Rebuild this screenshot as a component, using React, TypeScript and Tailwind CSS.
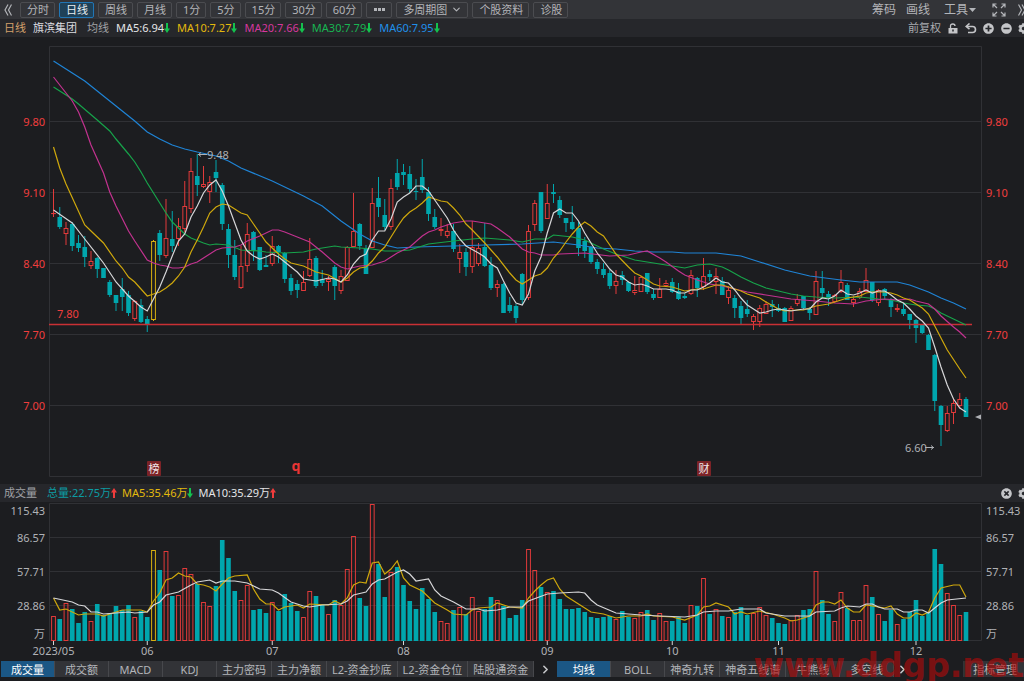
import { ChevronDown, ChevronRight } from "lucide-react";
import { FaCog, FaMinusCircle, FaPlusCircle, FaTimesCircle } from "react-icons/fa";
import clsx from "clsx";

type Kind = "u" | "d" | "y";
// kind, high, body top, body bottom, low, volume top
type Bar = [Kind, number, number, number, number, number];
type Point = [number, number];

const bars: Bar[] = [
  ["u", 189, 213, 213, 217, 616], ["d", 207, 217, 227, 229, 619], ["u", 222, 228, 234, 245, 603],
  ["d", 222, 224, 246, 251, 609], ["d", 235, 243, 248, 252, 623], ["d", 236, 247, 257, 267, 612],
  ["u", 251, 261, 266, 269, 621], ["d", 257, 258, 269, 278, 604], ["d", 268, 268, 278, 278, 615],
  ["d", 280, 282, 295, 297, 613], ["d", 295, 295, 303, 311, 606], ["d", 278, 289, 297, 311, 610],
  ["d", 291, 295, 313, 316, 605], ["u", 300, 301, 319, 321, 617], ["d", 299, 305, 322, 323, 611],
  ["d", 316, 319, 324, 332, 617], ["y", 240, 241, 320, 321, 550], ["d", 230, 233, 255, 261, 570],
  ["u", 199, 238, 256, 258, 551], ["d", 211, 239, 246, 252, 596], ["u", 218, 226, 239, 246, 595],
  ["u", 181, 206, 229, 232, 568], ["u", 158, 171, 209, 213, 574], ["d", 154, 176, 185, 196, 584],
  ["u", 166, 184, 187, 188, 602], ["u", 176, 182, 192, 203, 606], ["d", 160, 172, 178, 192, 586],
  ["d", 183, 185, 224, 230, 540], ["d", 224, 229, 255, 268, 558], ["d", 240, 255, 277, 280, 591],
  ["u", 246, 266, 288, 289, 600], ["u", 223, 234, 266, 272, 585], ["d", 231, 232, 251, 261, 610],
  ["d", 247, 247, 270, 271, 609], ["d", 255, 265, 267, 267, 613], ["u", 236, 246, 264, 266, 602],
  ["d", 245, 246, 252, 263, 611], ["d", 252, 253, 279, 283, 594], ["d", 274, 278, 291, 295, 603],
  ["d", 280, 284, 290, 298, 611], ["u", 271, 282, 291, 291, 617], ["u", 238, 259, 276, 277, 591],
  ["d", 256, 258, 286, 288, 596], ["d", 270, 279, 283, 286, 605], ["u", 276, 279, 282, 291, 614],
  ["d", 265, 267, 286, 300, 600], ["u", 270, 276, 291, 294, 605], ["u", 246, 247, 281, 281, 569],
  ["u", 193, 231, 247, 247, 536], ["d", 223, 224, 246, 250, 598], ["d", 245, 248, 274, 274, 606],
  ["u", 188, 203, 248, 248, 504], ["d", 177, 198, 207, 217, 564], ["d", 199, 215, 227, 230, 597],
  ["u", 179, 188, 227, 230, 572], ["d", 159, 173, 187, 190, 567], ["d", 164, 172, 175, 185, 585],
  ["d", 166, 174, 189, 193, 601], ["d", 179, 191, 192, 200, 609], ["d", 159, 177, 190, 193, 588],
  ["d", 187, 192, 214, 221, 599], ["d", 209, 217, 227, 229, 612], ["u", 218, 229, 231, 236, 621],
  ["u", 224, 231, 236, 238, 623], ["d", 224, 231, 249, 252, 610], ["u", 244, 252, 259, 273, 607],
  ["d", 248, 252, 267, 276, 614], ["u", 221, 247, 267, 273, 597], ["u", 243, 248, 264, 266, 611],
  ["d", 223, 247, 266, 267, 609], ["d", 257, 265, 288, 290, 597], ["u", 280, 284, 288, 297, 600],
  ["d", 283, 284, 313, 313, 606], ["d", 297, 305, 311, 313, 618], ["d", 304, 306, 318, 323, 615],
  ["d", 273, 274, 300, 304, 600], ["u", 225, 231, 298, 300, 549], ["u", 200, 203, 225, 231, 570],
  ["d", 192, 192, 231, 233, 587], ["u", 184, 203, 219, 219, 592], ["d", 184, 192, 194, 203, 591],
  ["d", 196, 200, 215, 218, 599], ["d", 218, 218, 223, 232, 609], ["d", 206, 222, 229, 230, 609],
  ["d", 222, 228, 248, 256, 608], ["d", 237, 241, 251, 258, 612], ["d", 246, 247, 262, 264, 617],
  ["d", 259, 262, 269, 274, 618], ["d", 263, 269, 275, 278, 617], ["d", 270, 273, 286, 289, 616],
  ["u", 270, 281, 286, 294, 619], ["d", 271, 275, 280, 285, 611], ["d", 281, 282, 291, 292, 617],
  ["u", 276, 290, 293, 295, 618], ["u", 276, 277, 292, 292, 612], ["d", 273, 273, 292, 294, 610],
  ["d", 289, 294, 298, 300, 620], ["u", 278, 289, 298, 298, 613], ["u", 280, 283, 286, 287, 621],
  ["d", 278, 282, 292, 293, 621], ["d", 283, 291, 299, 300, 617], ["d", 293, 296, 298, 299, 623],
  ["u", 270, 275, 294, 295, 605], ["d", 277, 278, 288, 297, 606], ["u", 258, 276, 287, 290, 578],
  ["d", 270, 274, 277, 281, 614], ["u", 268, 276, 282, 294, 609], ["d", 277, 281, 295, 295, 616],
  ["u", 286, 290, 298, 304, 617], ["d", 295, 298, 308, 318, 612], ["d", 301, 306, 318, 325, 607],
  ["d", 300, 309, 314, 317, 615], ["u", 314, 316, 322, 330, 613], ["u", 305, 308, 322, 327, 607],
  ["u", 301, 304, 314, 314, 615], ["d", 300, 304, 307, 317, 618], ["d", 304, 308, 311, 312, 623],
  ["d", 307, 308, 322, 322, 624], ["u", 306, 308, 321, 321, 620], ["u", 294, 299, 304, 306, 615],
  ["d", 296, 296, 308, 310, 610], ["d", 307, 309, 313, 320, 609], ["u", 271, 281, 315, 315, 571],
  ["d", 271, 288, 293, 297, 600], ["d", 291, 294, 298, 306, 614], ["u", 294, 295, 302, 303, 621],
  ["u", 270, 282, 292, 293, 592], ["d", 283, 285, 300, 300, 608], ["u", 296, 299, 303, 307, 620],
  ["u", 288, 291, 298, 299, 620], ["u", 268, 280, 292, 292, 585], ["d", 282, 282, 300, 302, 597],
  ["u", 289, 290, 303, 306, 614], ["d", 288, 289, 296, 299, 621], ["d", 298, 299, 307, 317, 610],
  ["u", 304, 308, 310, 312, 624], ["d", 303, 309, 314, 316, 619], ["d", 314, 314, 320, 329, 612],
  ["d", 319, 320, 328, 343, 600], ["d", 325, 325, 333, 334, 616], ["d", 334, 335, 350, 350, 612],
  ["d", 354, 355, 401, 411, 549], ["d", 405, 406, 425, 446, 564], ["u", 406, 413, 431, 432, 593],
  ["u", 398, 403, 413, 424, 605], ["u", 393, 399, 406, 408, 615], ["d", 397, 399, 417, 417, 612],
];

const ma5: Point[] = [
  [0, 210], [3, 223], [5, 239], [8, 263], [10, 282], [12, 296], [14, 307], [15, 311], [16, 299], [17, 287],
  [18, 272], [19, 256], [20, 241], [21, 234], [22, 217], [23, 206], [24, 193], [25, 185], [26, 180], [27, 191],
  [28, 206], [29, 223], [30, 240], [31, 251], [32, 256], [33, 259], [34, 257], [35, 254], [36, 257], [37, 262],
  [39, 272], [40, 279], [42, 281], [44, 278], [45, 279], [46, 282], [47, 275], [48, 264], [49, 257], [50, 254],
  [51, 240], [52, 231], [53, 231], [54, 219], [55, 202], [56, 197], [57, 193], [58, 186], [59, 186], [60, 191],
  [61, 200], [62, 209], [63, 218], [64, 230], [65, 239], [66, 246], [68, 253], [69, 257], [70, 264], [71, 268],
  [72, 281], [73, 293], [74, 303], [75, 305], [76, 294], [77, 271], [78, 257], [79, 233], [80, 213], [81, 209],
  [82, 213], [83, 213], [84, 221], [85, 233], [86, 243], [87, 253], [88, 261], [89, 269], [90, 275], [91, 277],
  [92, 282], [93, 285], [94, 284], [95, 286], [96, 289], [98, 289], [99, 290], [100, 293], [101, 293], [102, 290],
  [103, 290], [104, 287], [105, 283], [106, 278], [107, 282], [108, 283], [109, 290], [110, 298], [111, 305],
  [112, 309], [113, 313], [114, 312], [115, 310], [116, 309], [118, 311], [120, 309], [121, 309], [122, 302],
  [123, 298], [124, 299], [125, 296], [126, 290], [127, 294], [128, 295], [129, 293], [130, 290], [131, 293],
  [132, 291], [133, 291], [134, 295], [135, 300], [136, 303], [137, 309], [138, 316], [139, 321], [140, 328],
  [141, 347], [142, 367], [143, 385], [144, 399], [145, 408], [146, 412],
];

const ma10: Point[] = [
  [0, 147], [1, 168], [2, 184], [5, 225], [6, 231], [8, 243], [10, 261], [11, 268], [12, 277], [13, 282],
  [15, 296], [16, 294], [17, 292], [18, 288], [19, 283], [20, 276], [21, 267], [22, 252], [23, 240], [24, 227],
  [25, 213], [26, 207], [27, 204], [28, 205], [29, 209], [30, 213], [31, 215], [32, 224], [33, 233], [34, 242],
  [35, 248], [36, 254], [37, 259], [38, 263], [40, 266], [42, 272], [44, 275], [46, 282], [47, 278], [48, 272],
  [49, 268], [50, 267], [51, 261], [52, 253], [53, 247], [54, 237], [55, 227], [56, 218], [57, 212], [58, 208],
  [59, 203], [60, 197], [61, 199], [62, 201], [63, 202], [64, 208], [65, 215], [66, 224], [67, 230], [69, 243],
  [70, 250], [71, 257], [73, 273], [74, 280], [75, 284], [76, 280], [77, 276], [78, 274], [79, 268], [80, 258],
  [81, 251], [82, 242], [83, 234], [84, 227], [85, 222], [86, 226], [87, 232], [88, 236], [89, 245], [90, 254],
  [92, 267], [93, 273], [94, 276], [96, 284], [97, 286], [99, 287], [101, 291], [103, 289], [104, 289],
  [106, 285], [107, 285], [108, 287], [109, 289], [110, 291], [111, 294], [112, 296], [113, 298], [114, 302],
  [116, 309], [117, 311], [119, 310], [120, 310], [122, 306], [124, 304], [125, 302], [127, 298], [129, 296],
  [130, 293], [131, 292], [133, 292], [134, 293], [135, 295], [136, 298], [137, 300], [138, 304], [139, 308],
  [140, 314], [141, 326], [142, 338], [143, 350], [145, 369], [146, 378],
];

const ma20: Point[] = [
  [0, 77], [2, 93], [3, 101], [4, 112], [5, 127], [6, 145], [7, 159], [8, 173], [9, 192], [10, 206], [12, 231],
  [13, 241], [15, 260], [16, 263], [17, 265], [18, 266], [19, 268], [20, 268], [21, 267], [22, 264], [23, 262],
  [24, 258], [26, 250], [27, 248], [29, 247], [30, 245], [31, 241], [33, 236], [35, 230], [36, 230], [37, 232],
  [39, 237], [41, 242], [43, 252], [45, 263], [46, 267], [47, 269], [49, 266], [51, 265], [53, 261], [55, 253],
  [57, 247], [59, 236], [60, 232], [61, 230], [62, 227], [64, 223], [66, 221], [67, 221], [69, 223], [70, 224],
  [71, 228], [73, 237], [75, 249], [76, 252], [77, 253], [78, 255], [80, 255], [81, 254], [85, 253], [89, 256],
  [92, 255], [94, 252], [95, 251], [97, 258], [98, 262], [100, 271], [101, 275], [103, 280], [105, 284],
  [107, 286], [109, 289], [111, 292], [114, 295], [118, 299], [122, 301], [125, 303], [128, 304], [130, 301],
  [133, 299], [135, 300], [137, 299], [138, 301], [140, 304], [141, 309], [142, 316], [144, 327], [145, 332],
  [146, 338],
];

const ma30: Point[] = [
  [0, 87], [3, 99], [4, 104], [7, 120], [9, 131], [10, 139], [12, 154], [13, 162], [14, 172], [15, 183],
  [17, 203], [18, 213], [19, 222], [21, 234], [22, 238], [24, 243], [25, 245], [26, 244], [28, 245], [30, 250],
  [33, 251], [34, 252], [37, 253], [40, 252], [42, 249], [45, 246], [46, 247], [49, 248], [51, 249], [53, 251],
  [55, 251], [57, 250], [58, 248], [60, 244], [64, 241], [67, 239], [69, 238], [73, 240], [75, 242], [77, 239],
  [79, 239], [80, 235], [83, 237], [85, 240], [88, 249], [90, 254], [93, 260], [96, 263], [98, 265], [101, 268],
  [103, 265], [105, 264], [107, 267], [108, 270], [110, 277], [112, 283], [114, 288], [116, 291], [118, 294],
  [120, 296], [122, 297], [125, 298], [129, 297], [132, 299], [134, 300], [136, 303], [138, 305], [140, 306],
  [141, 309], [142, 313], [144, 319], [146, 325],
];

const ma60: Point[] = [
  [0, 61], [3, 73], [5, 81], [10, 106], [13, 121], [15, 132], [17, 139], [19, 145], [21, 149], [23, 152],
  [26, 156], [28, 161], [30, 168], [35, 181], [40, 196], [43, 206], [46, 221], [49, 234], [51, 241], [53, 245],
  [55, 248], [58, 247], [64, 246], [69, 245], [75, 244], [80, 242], [84, 245], [87, 248], [90, 249], [93, 251],
  [96, 252], [99, 252], [101, 253], [106, 253], [110, 256], [113, 262], [117, 270], [121, 276], [126, 280],
  [129, 282], [135, 282], [137, 285], [140, 292], [142, 298], [144, 303], [146, 309],
];

const volMa5: Point[] = [
  [0, 598], [1, 610], [2, 609], [4, 615], [5, 614], [7, 614], [8, 616], [10, 612], [11, 610], [14, 610],
  [15, 612], [16, 601], [17, 593], [18, 580], [19, 578], [20, 573], [21, 576], [22, 577], [23, 584], [24, 585],
  [25, 587], [26, 591], [27, 584], [28, 578], [29, 576], [31, 575], [32, 589], [33, 599], [34, 604], [35, 604],
  [36, 610], [37, 607], [38, 606], [39, 605], [40, 608], [41, 604], [44, 605], [45, 601], [46, 604], [47, 598],
  [48, 585], [49, 582], [50, 583], [51, 563], [52, 562], [53, 574], [54, 569], [55, 561], [56, 578], [57, 585],
  [59, 591], [61, 603], [63, 610], [64, 614], [66, 615], [67, 610], [68, 608], [70, 607], [71, 603], [73, 607],
  [75, 608], [76, 598], [77, 591], [78, 585], [79, 580], [80, 578], [81, 589], [82, 596], [84, 604], [86, 612],
  [88, 614], [90, 618], [92, 616], [94, 616], [95, 614], [96, 616], [99, 617], [101, 620], [103, 615],
  [104, 607], [105, 606], [106, 603], [108, 607], [109, 614], [110, 612], [111, 614], [113, 611], [115, 614],
  [117, 618], [118, 621], [119, 620], [121, 616], [122, 605], [123, 602], [124, 602], [125, 604], [126, 600],
  [127, 608], [128, 612], [129, 612], [130, 605], [133, 608], [134, 606], [135, 614], [136, 618], [137, 618],
  [138, 613], [139, 615], [140, 612], [141, 598], [142, 588], [144, 585], [145, 585], [146, 597],
];

const volMa10: Point[] = [
  [0, 598], [3, 602], [4, 605], [5, 606], [6, 612], [7, 612], [8, 614], [12, 612], [13, 613], [15, 612],
  [16, 605], [17, 602], [18, 595], [20, 592], [22, 585], [23, 582], [25, 580], [26, 583], [27, 581], [29, 581],
  [31, 583], [33, 589], [35, 590], [36, 593], [38, 602], [40, 606], [41, 607], [43, 605], [46, 604], [47, 601],
  [48, 595], [50, 592], [51, 584], [52, 580], [53, 579], [55, 572], [56, 570], [57, 574], [58, 581], [60, 579],
  [61, 590], [62, 596], [64, 602], [66, 609], [68, 609], [69, 611], [71, 610], [73, 607], [75, 607], [76, 601],
  [79, 594], [81, 593], [84, 592], [85, 593], [86, 600], [87, 605], [90, 613], [94, 615], [97, 616], [101, 617],
  [103, 615], [104, 612], [106, 611], [108, 611], [110, 609], [113, 609], [114, 613], [117, 616], [121, 616],
  [122, 612], [125, 611], [126, 608], [127, 606], [129, 607], [130, 604], [131, 604], [132, 607], [133, 609],
  [135, 609], [136, 612], [137, 612], [138, 610], [139, 610], [140, 613], [141, 608], [142, 603], [143, 600],
  [146, 598],
];

const kindColor: Record<Kind, string> = { u: "#e23a3a", d: "#00a6ad", y: "#d8b010" };

const barX = (i: number) => 53.5 + i * 6.25;

const toPoints = (points: Point[]) => points.map(([i, y]) => `${barX(i)},${y}`).join(" ");

function Line({ points, color }: { points: Point[]; color: string }) {
  return <polyline points={toPoints(points)} fill="none" stroke={color} strokeWidth="1.2" />;
}

function Candle({ bar, index }: { bar: Bar; index: number }) {
  const [kind, high, top, bottom, low] = bar;
  const x = barX(index);
  const color = kindColor[kind];
  const height = Math.max(bottom - top, 1);

  return (
    <g>
      <path d={`M${x} ${high}V${top}M${x} ${bottom}V${low}`} stroke={color} />
      {kind === "d" ? (
        <rect x={x - 2.3} y={top} width="4.6" height={height} fill={color} />
      ) : (
        <rect x={x - 1.9} y={top + 0.5} width="3.8" height={Math.max(height - 1, 0.1)} fill="none" stroke={color} />
      )}
    </g>
  );
}

function VolumeBar({ bar, index }: { bar: Bar; index: number }) {
  const kind = bar[0];
  const top = bar[5];
  const x = barX(index);

  return kind === "d" ? (
    <rect x={x - 2.3} y={top} width="4.6" height={641 - top} fill={kindColor[kind]} />
  ) : (
    <rect x={x - 1.9} y={top + 0.5} width="3.8" height={640 - top} fill="none" stroke={kindColor[kind]} />
  );
}

const priceTicks = [
  { label: "9.80", y: 122 },
  { label: "9.10", y: 193 },
  { label: "8.40", y: 264 },
  { label: "7.70", y: 335 },
  { label: "7.00", y: 406 },
];

const badges = [
  { label: "榜", x: 147 },
  { label: "财", x: 697 },
];

function PriceChart() {
  return (
    <svg viewBox="0 37 1024 447" className="block w-full text-[11px]" role="img" aria-label="日线">
      <g stroke="#303135" fill="none">
        <path d="M49.5 46.5H981.5V476.5H49.5Z" />
        {priceTicks.map((t) => (
          <path key={t.label} d={`M49 ${t.y - 0.5}H981`} />
        ))}
      </g>
      <g fill="#f03e3e">
        {priceTicks.map((t) => (
          <g key={t.label}>
            <text x="45" y={t.y + 4} textAnchor="end">{t.label}</text>
            <text x="986" y={t.y + 4}>{t.label}</text>
          </g>
        ))}
        <text x="57" y="318">7.80</text>
      </g>
      {bars.map((bar, i) => (
        <Candle key={i} bar={bar} index={i} />
      ))}
      <path d="M49 324.5H972" stroke="#c93034" strokeWidth="1.4" />
      <Line points={ma60} color="#1f84d6" />
      <Line points={ma30} color="#17a34a" />
      <Line points={ma20} color="#c2328f" />
      <Line points={ma10} color="#cfa80c" />
      <Line points={ma5} color="#d6d6d8" />

      <g fill="#aeb0b4">
        <text x="207" y="159">9.48</text>
        <text x="905" y="452">6.60</text>
        <path d="M975 417L981 414.500V419.500Z" />
      </g>
      <g stroke="#aeb0b4" fill="none">
        <path d="M207 154.500H198M201 152.500L198.500 154.500L201 156.500" />
        <path d="M925 447.500H934M931 445.500L933.500 447.500L931 449.500" />
      </g>

      {badges.map((b) => (
        <g key={b.label}>
          <rect x={b.x} y="461" width="14" height="15" rx="1" fill="#7c2327" />
          <text x={b.x + 7} y="472.500" textAnchor="middle" fill="#f0e6e6">{b.label}</text>
        </g>
      ))}
      <text x="296" y="471" textAnchor="middle" fill="#e93535" className="text-[14px] font-bold">q</text>
    </svg>
  );
}

const volumeTicks = [
  { label: "115.43", y: 515 },
  { label: "86.57", y: 542 },
  { label: "57.71", y: 576 },
  { label: "28.86", y: 610 },
  { label: "万", y: 638 },
];

const months = [
  { label: "2023/05", index: 0 },
  { label: "06", index: 15 },
  { label: "07", index: 35 },
  { label: "08", index: 56 },
  { label: "09", index: 79 },
  { label: "10", index: 99 },
  { label: "11", index: 116 },
  { label: "12", index: 138 },
];

function VolumeChart() {
  return (
    <svg viewBox="0 502 1024 159" className="block w-full text-[11px]" role="img" aria-label="成交量">
      <g stroke="#303135" fill="none">
        <path d="M49.5 503.5H981.5V640.5H49.5Z" />
        <path d="M49 537.5H981M49 571.5H981M49 605.5H981" />
      </g>
      <g fill="#b0b2b6">
        {volumeTicks.map((t) => (
          <g key={t.label}>
            <text x="45" y={t.y} textAnchor="end">{t.label}</text>
            <text x="986" y={t.y}>{t.label}</text>
          </g>
        ))}
      </g>
      {bars.map((bar, i) => (
        <VolumeBar key={i} bar={bar} index={i} />
      ))}
      <Line points={volMa5} color="#cfa80c" />
      <Line points={volMa10} color="#d6d6d8" />
      {months.map((m) => (
        <g key={m.label}>
          <path d={`M${barX(m.index)} 641V645`} stroke="#d6d6d8" />
          <text x={barX(m.index)} y="655" textAnchor="middle" fill="#b0b2b6">{m.label}</text>
        </g>
      ))}
    </svg>
  );
}

function Arrow({ up = false }: { up?: boolean }) {
  return (
    <svg viewBox="0 0 6 10" className={clsx("h-[10px] w-[6px] shrink-0", up ? "rotate-180 text-[#f03c3c]" : "text-[#14c24e]")}>
      <path d="M2 0H4V5.500H6L3 10L0 5.500H2Z" fill="currentColor" />
    </svg>
  );
}

function DoubleChevron({ flip = false }: { flip?: boolean }) {
  return (
    <svg viewBox="0 0 8 12" className={clsx("h-3 w-2", flip && "rotate-180")} fill="none" stroke="currentColor" strokeWidth="1.200">
      <path d="M4 0.500L1 6L4 11.500M7.500 0.500L4.500 6L7.500 11.500" />
    </svg>
  );
}

function Reading({ text, color, up }: { text: string; color: string; up?: boolean }) {
  return (
    <span className={clsx("flex items-center", color)}>
      {text}
      <Arrow up={up} />
    </span>
  );
}

const periods = ["分时", "日线", "周线", "月线", "1分", "5分", "15分", "30分", "60分"];

const toolButton = "flex h-4 items-center rounded-[2px] border pr-[5px] pl-[6px] leading-none";

function Toolbar() {
  return (
    <header className="flex h-[19px] items-center bg-[#333438] text-[#b3b5b9]">
      <button aria-label="收起" className="flex w-[15px] shrink-0 justify-center">
        <DoubleChevron />
      </button>
      <nav className="ml-[5px] flex gap-1">
        {periods.map((p) => (
          <button
            key={p}
            className={clsx(
              toolButton,
              p === "日线" ? "border-[#2176b5] bg-[#1f4158] text-[#e8eef2]" : "border-[#4b4c50]",
            )}
          >
            {p}
          </button>
        ))}
        <button aria-label="更多周期" className={clsx(toolButton, "border-[#4b4c50]")}>
          <svg viewBox="0 0 13 3" className="h-[3px] w-[13px]" fill="currentColor">
            <path d="M1 0H4V3H1ZM5 0H8V3H5ZM9 0H12V3H9Z" />
          </svg>
        </button>
        <button className={clsx(toolButton, "gap-1 border-[#4b4c50]")}>
          多周期图
          <ChevronDown size={11} strokeWidth={2.5} />
        </button>
        <button className={clsx(toolButton, "border-[#4b4c50]")}>个股资料</button>
        <button className={clsx(toolButton, "border-[#4b4c50]")}>诊股</button>
      </nav>
      <div className="-mr-[2px] ml-auto flex shrink-0 items-center text-[12px]">
        <button className="mr-[10px]">筹码</button>
        <button className="mr-[14px]">画线</button>
        <button className="mr-4 flex items-center gap-px">
          工具
          <svg viewBox="0 0 7 4" className="h-1 w-[7px]" fill="currentColor">
            <path d="M0 0H7L3.500 4Z" />
          </svg>
        </button>
        <button aria-label="全屏" className="mr-3">
          <svg viewBox="0 0 14 14" className="size-[14px]" fill="none" stroke="currentColor" strokeWidth="1.200">
            <path d="M1 4.500V1H4.500M1 1L5 5M9.500 1H13V4.500M13 1L9 5M1 9.500V13H4.500M1 13L5 9M13 9.500V13H9.500M13 13L9 9" />
          </svg>
        </button>
        <button aria-label="展开">
          <DoubleChevron flip />
        </button>
      </div>
    </header>
  );
}

function PriceHeader() {
  return (
    <div className="flex h-[18px] items-center bg-[#26272b] pl-1">
      <span className="text-[#d3a16b]">日线</span>
      <h1 className="ml-[7px] text-[#dcdde0]">旗滨集团</h1>
      <span className="ml-[10px] text-[#a0a2a6]">均线</span>
      <div className="ml-[7px] flex gap-[7px]">
        <Reading text="MA5:6.94" color="text-[#e4e5e7]" />
        <Reading text="MA10:7.27" color="text-[#e3b90d]" />
        <Reading text="MA20:7.66" color="text-[#d6379e]" />
        <Reading text="MA30:7.79" color="text-[#18b552]" />
        <Reading text="MA60:7.95" color="text-[#2090ea]" />
      </div>
      <div className="-mr-[5px] ml-auto flex shrink-0 items-center text-[#c4c5c8]">
        <button className="mr-[7px] text-[#a9abaf]">前复权</button>
        <button aria-label="锁定" className="mr-[7px]">
          <svg viewBox="0 0 10 11" className="h-[11px] w-[10px]" fill="none" stroke="currentColor">
            <path d="M2.500 5V3Q2.500 1 4.800 1Q7 1 7 3" strokeWidth="1.300" />
            <path d="M0.500 5H9.500V10.500H0.500Z" fill="currentColor" stroke="none" />
            <path d="M5 6.500V8.500" stroke="#26272b" strokeWidth="1.500" />
          </svg>
        </button>
        <button aria-label="撤销" className="mr-[6px]">
          <svg viewBox="0 0 12 11" className="h-[11px] w-3" fill="none" stroke="currentColor" strokeWidth="1.600">
            <path d="M2 3.500H7.500Q10.500 3.500 10.500 6.500Q10.500 9.500 7.500 9.500H3" />
            <path d="M4.500 0.500L1.200 3.500L4.500 6.200" />
          </svg>
        </button>
        <button aria-label="放大" className="mr-[7px]">
          <FaPlusCircle size={11} />
        </button>
        <button aria-label="缩小" className="mr-[6px]">
          <FaMinusCircle size={11} />
        </button>
        <button aria-label="设置">
          <FaCog size={11} />
        </button>
      </div>
    </div>
  );
}

function VolumeHeader() {
  return (
    <div className="flex h-[18px] items-center bg-[#26272b] pl-1">
      <h2 className="text-[#a0a2a6]">成交量</h2>
      <div className="ml-[10px] flex gap-[5px]">
        <Reading text="总量:22.75万" color="text-[#0c9ca3]" up />
        <Reading text="MA5:35.46万" color="text-[#e3b90d]" />
        <Reading text="MA10:35.29万" color="text-[#e4e5e7]" up />
      </div>
      <div className="-mr-[5px] ml-auto flex shrink-0 items-center text-[#c4c5c8]">
        <button aria-label="关闭" className="mr-[6px]">
          <FaTimesCircle size={11} />
        </button>
        <button aria-label="设置">
          <FaCog size={11} />
        </button>
      </div>
    </div>
  );
}

const volumeTabs = ["成交量", "成交额", "MACD", "KDJ", "主力密码", "主力净额", "L2-资金抄底", "L2-资金仓位", "陆股通资金"];
const priceTabs = ["均线", "BOLL", "神奇九转", "神奇五线谱", "牛熊线", "多空线"];

function Tabs({ items }: { items: string[] }) {
  return (
    <div className="flex shrink-0">
      {items.map((item, i) => (
        <button
          key={item}
          className={clsx(
            "h-4 min-w-[54px] border-r border-[#47484c] px-[5px] leading-none whitespace-nowrap",
            i === 0 ? "bg-[#1b5785] text-white" : "bg-[#323337] text-[#b3b5b9]",
          )}
        >
          {item}
        </button>
      ))}
    </div>
  );
}

function TabBar() {
  return (
    <footer className="relative flex items-center pl-px">
      <Tabs items={volumeTabs} />
      <button aria-label="更多指标" className="flex w-[23px] justify-center text-[#c4c5c8]">
        <ChevronRight size={13} strokeWidth={3} />
      </button>
      <Tabs items={priceTabs} />
      <button aria-label="更多均线" className="flex w-4 justify-center text-[#c4c5c8]">
        <ChevronRight size={13} strokeWidth={3} />
      </button>
      <button className="ml-auto h-4 shrink-0 bg-[#323337] pr-[7px] pl-[10px] leading-none text-[#b3b5b9]">指标管理</button>
      <span className="pointer-events-none absolute right-0 bottom-[-9px] font-['DejaVu_Sans'] text-[33px] leading-[40px] font-bold text-[#b00a0a]/65">
        www.ddgp.net
      </span>
    </footer>
  );
}

export default function App() {
  return (
    <main className="min-h-screen overflow-hidden bg-[#1c1d20] font-['Noto_Sans','Noto_Sans_CJK_SC',sans-serif] text-[11px] leading-[16px] whitespace-nowrap">
      <Toolbar />
      <PriceHeader />
      <PriceChart />
      <VolumeHeader />
      <VolumeChart />
      <TabBar />
    </main>
  );
}
